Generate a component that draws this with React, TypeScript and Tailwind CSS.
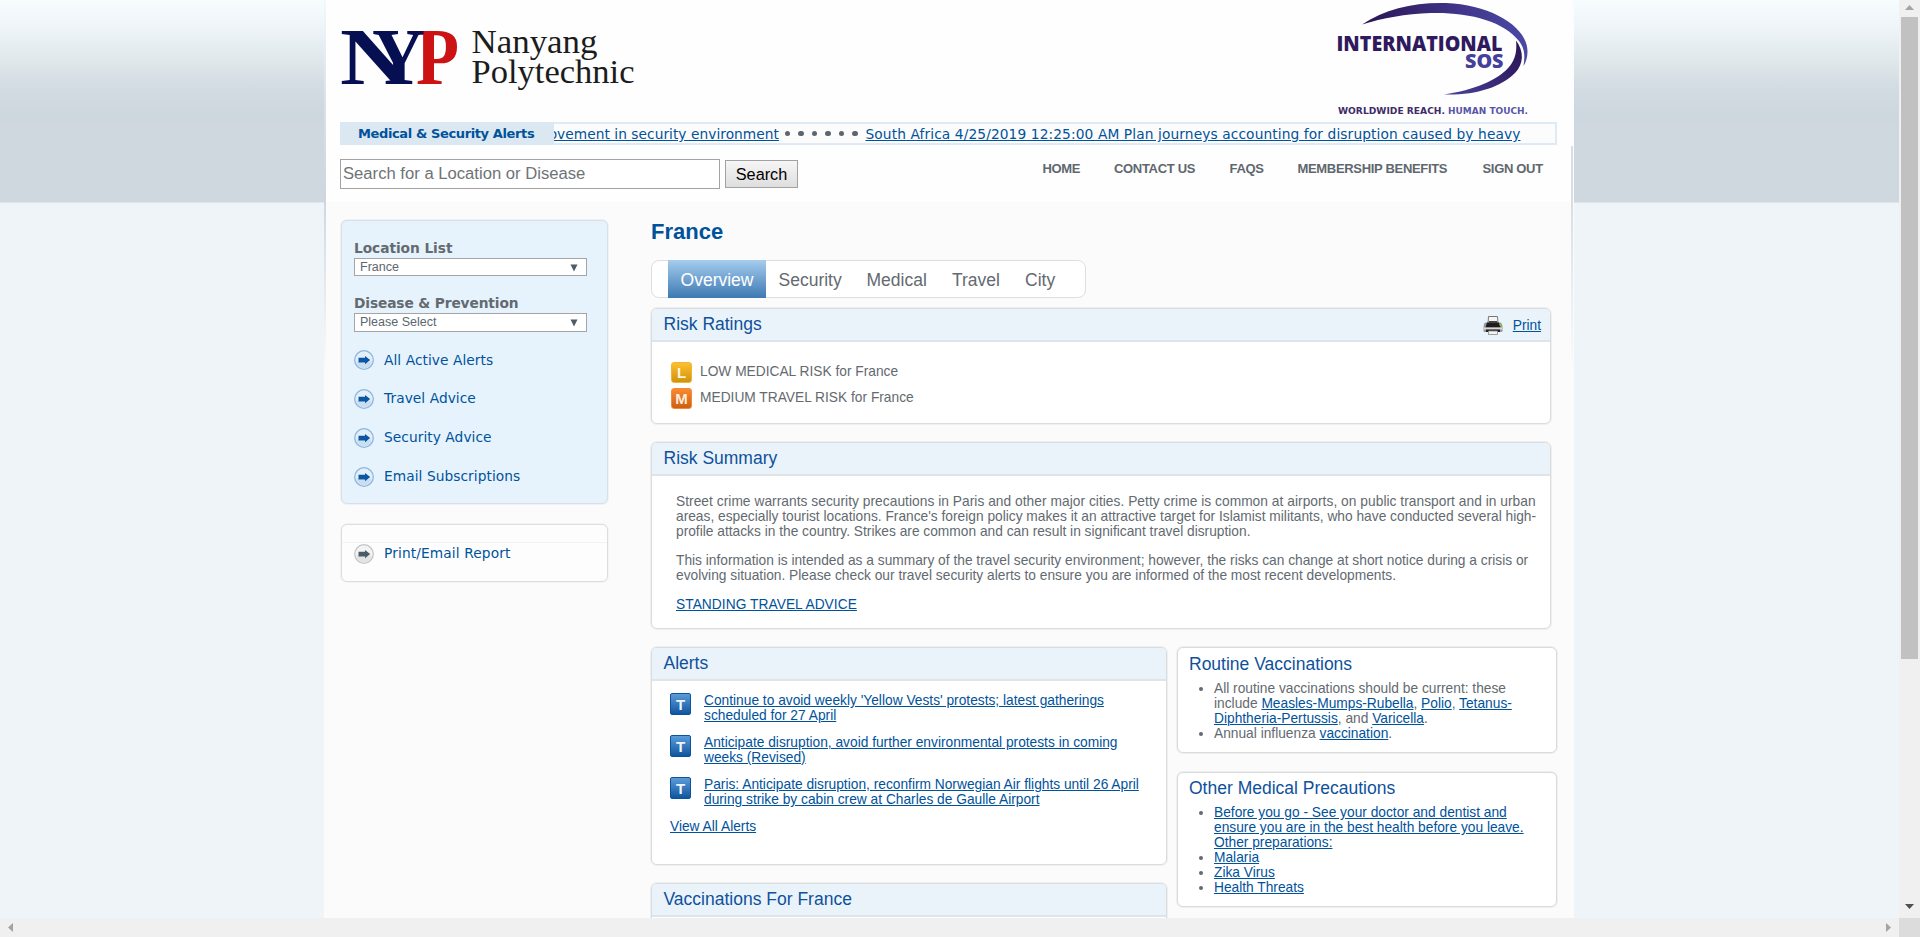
import type { ReactNode } from 'react';

const LINK = 'text-[#00529b] underline underline-offset-1';

function NypLogo() {
  return (
    <svg width="310" height="122" viewBox="340 0 310 122" aria-label="Nanyang Polytechnic">
      <defs>
        <clipPath id="nClip">
          <path d="M338 20H366L407 82V92H338z" />
        </clipPath>
      </defs>
      <g fontFamily="Liberation Serif, serif" fontWeight="700" fontSize="80">
        <text x="340" y="84" fill="#060f52" textLength="68" lengthAdjust="spacingAndGlyphs" clipPath="url(#nClip)">N</text>
        <text x="416" y="84" fill="#cc1212" textLength="43" lengthAdjust="spacingAndGlyphs">P</text>
        <text x="372" y="84" fill="#060f52" textLength="53" lengthAdjust="spacingAndGlyphs">Y</text>
      </g>
      <g fontFamily="Liberation Serif, serif" fontSize="33" fill="#1c1c1c">
        <text x="471.500" y="52.500" textLength="126" lengthAdjust="spacingAndGlyphs">Nanyang</text>
        <text x="471.500" y="82.500" textLength="163" lengthAdjust="spacingAndGlyphs">Polytechnic</text>
      </g>
    </svg>
  );
}

function SosLogo() {
  return (
    <svg width="200" height="122" viewBox="1332 0 200 122" aria-label="International SOS">
      <defs>
        <linearGradient id="swooshTop" x1="0" x2="1">
          <stop offset="0" stopColor="#2a1552" />
          <stop offset="0.6" stopColor="#41368c" />
          <stop offset="1" stopColor="#4a49a3" />
        </linearGradient>
        <linearGradient id="swooshBottom" x1="0" x2="1" y1="1" y2="0">
          <stop offset="0" stopColor="#4a449c" />
          <stop offset="0.6" stopColor="#33206a" />
          <stop offset="1" stopColor="#2a1552" />
        </linearGradient>
      </defs>
      <path d="M1362 24.500C1385 9 1415 2 1446 3C1492 5 1528 27 1527.500 52C1527.300 58 1526 62 1523.500 66C1525 56 1525 49 1519 41C1504 21 1468 12 1431 13C1405 14 1383 18 1362 24.500Z" fill="url(#swooshTop)" />
      <path d="M1516 40.500C1524 51 1524 64 1515 73C1500 88 1474 95.500 1444 94.500C1474 90 1498 80 1509 67C1516 59 1517 50 1516 40.500Z" fill="url(#swooshBottom)" />
      <g fontFamily="Open Sans, sans-serif" fontWeight="800">
        <text x="1336.500" y="51" fontSize="21" fill="#2f1a5e" textLength="166" lengthAdjust="spacingAndGlyphs">INTERNATIONAL</text>
        <text x="1465" y="68" fontSize="19.500" fill="#45409a" textLength="38.500" lengthAdjust="spacingAndGlyphs">SOS</text>
      </g>
      <g fontFamily="DejaVu Sans, sans-serif" fontWeight="700" fontSize="9.500">
        <text x="1338" y="114" fill="#3f2c68" textLength="107" lengthAdjust="spacingAndGlyphs">WORLDWIDE REACH.</text>
        <text x="1448" y="114" fill="#5a55a8" textLength="80" lengthAdjust="spacingAndGlyphs">HUMAN TOUCH.</text>
      </g>
    </svg>
  );
}

function ArrowIcon({ gray = false }: { gray?: boolean }) {
  const ring = gray ? '#c3c6c9' : '#8fb6dc';
  const arrow = gray ? '#4c5b66' : '#0b57a3';
  return (
    <svg width="20" height="20" viewBox="0 0 20 20" className="shrink-0">
      <circle cx="10" cy="10" r="9.300" fill={gray ? '#f3f3f3' : '#e3eff9'} stroke={ring} strokeWidth="1.300" />
      <path d="M2.500 11a7.500 7.500 0 0 0 15 0c-4 2-11 2-15 0z" fill={gray ? '#e2e3e4' : '#c9dff1'} />
      <path d="M4.500 7.800h6.500V6l5.200 4.100-5.200 4.100v-1.800H4.500z" fill={arrow} />
    </svg>
  );
}

function PrinterIcon() {
  return (
    <svg width="20" height="19" viewBox="0 0 20 19" className="shrink-0">
      <path d="M1 8Q1 7 2.500 6.500h15Q19 7 19.500 10v5q0 1-1 1h-17q-1 0-1-1v-4z" fill="#9a9a9a" />
      <path d="M5.500 0.500h9L15 8H5z" fill="#f4f4f4" stroke="#777" />
      <path d="M4 6.500h12l1.500 5h-15z" fill="#1d1d1d" />
      <path d="M6 5h8v2H6z" fill="#444" />
      <path d="M1 11.500h18v2H1z" fill="#d8d8d8" />
      <path d="M3 13.500h14v2.500H3z" fill="#222" />
      <path d="M5.500 15h9v3.500h-9z" fill="#f2f2f2" stroke="#888" strokeWidth=".8" />
      <circle cx="17.500" cy="8.500" r="1.200" fill="#7cc82e" />
    </svg>
  );
}

function Panel({ title, className, action, children }: { title: string; className: string; action?: ReactNode; children?: ReactNode }) {
  return (
    <section className={`flex flex-col overflow-hidden rounded-[6px] border border-[#d9dde0] bg-white shadow-[0_0_0_1px_#eeefef] ${className}`}>
      <header className="flex h-[33px] shrink-0 items-start justify-between border-b-2 border-[#dfe4e8] bg-[#ebf3fa] pt-[5px] pr-[9px] pl-[11.5px]">
        <h2 className="text-[17.5px] leading-5 text-[#0e519c]">{title}</h2>
        {action}
      </header>
      {children}
    </section>
  );
}

function SideBox({ title, className, children }: { title: string; className: string; children: ReactNode }) {
  return (
    <section className={`rounded-[6px] border border-[#d9dbdd] bg-white pl-[11px] shadow-[0_0_0_1px_#eeefef] ${className}`}>
      <h2 className="text-[17.5px] leading-5 text-[#0e519c]">{title}</h2>
      <ul className="mt-[7px] list-disc pl-[25px] text-[13.75px] leading-[15px] whitespace-nowrap">{children}</ul>
    </section>
  );
}

function SelectBox({ value, className }: { value: string; className: string }) {
  return (
    <div className={`flex w-[233px] justify-between border border-[#a5a5a5] bg-white pl-[5px] pr-2 text-[12.5px] leading-[17px] text-[#5d666e] ${className}`}>
      <span>{value}</span>
      <svg width="8" height="8" viewBox="0 0 8 8" className="mt-[5px]"><path d="M.5.500h7L4 7.500z" fill="#4f5c66" /></svg>
    </div>
  );
}

function AlertItem({ lines }: { lines: string[] }) {
  return (
    <li className="flex h-[42px] items-start gap-[13px]">
      <span className="flex h-[22px] w-[21px] items-center justify-center rounded-[2px] border border-[#0a549b] bg-linear-to-b from-[#5b9bd8] to-[#0c569f] text-[15px] font-bold text-[#eef5fc]">T</span>
      <a className={`${LINK} whitespace-nowrap`}>{lines[0]}<br />{lines[1]}</a>
    </li>
  );
}

const NAV = [
  ['HOME', 'w-[71.5px]'],
  ['CONTACT US', 'w-[115.5px]'],
  ['FAQS', 'w-[68px]'],
  ['MEMBERSHIP BENEFITS', 'w-[185px]'],
  ['SIGN OUT', 'w-[60px]'],
];

export default function App() {
  return (
    <div className="flex h-[937px] w-[1920px] flex-col overflow-hidden font-['Liberation_Sans',Arial,sans-serif] text-[#636a70]">
      <div className="flex h-[918px]">
        <div className="flex h-full w-[1899px] overflow-hidden bg-[#eff4f8] bg-[linear-gradient(to_bottom,#f7fcff_0px,#eef4f8_28px,#dfe7ea_62px,#d3dbe3_88px,#cdd7de_115px,#cfd7df_125px,#cfd7df_202px,#eff4f8_203px)] pl-[324px]">
          <div className="flex h-full w-[1250px] flex-col bg-[#fbfbfb]">
            <div className="flex h-[202px] shrink-0">
              <div className="w-[2px] bg-linear-to-b from-[#f3f8fb] via-[#dbe2e7] to-[#cdd6dd]" />
              <div className="flex w-[1245px] flex-col bg-[#fefefe] pl-[14px]">
                <div className="flex h-[122px] justify-between pr-[39px]">
                  <NypLogo />
                  <SosLogo />
                </div>
                <div className="flex h-[23px] w-[1217px] shrink-0 border-y-2 border-r-2 border-[#dfeaf4] bg-[#fcfcfc] font-['DejaVu_Sans',Verdana,sans-serif] leading-[19px]">
                  <div className="-my-[2px] h-[23px] w-[214px] shrink-0 bg-[#dbe8f1] pt-[2px] pl-[18px] text-[13px] font-bold tracking-[-0.38px] whitespace-nowrap text-[#00529b]">
                    Medical &amp; Security Alerts
                  </div>
                  <div className="flex w-[1001px] justify-end overflow-hidden pr-[34.5px] text-[13.75px] leading-[21px] tracking-[0.11px] whitespace-pre">
                    <a className={`${LINK} tracking-[0.04px]`}>rovement in security environment</a>
                    <span className="flex h-[19px] w-[86.5px] shrink-0 items-center gap-2 pl-[6px]">
                      {[0, 1, 2, 3, 4, 5].map((i) => (
                        <i key={i} className="size-[5.5px] rounded-full bg-[#5d666e]" />
                      ))}
                    </span>
                    <a className={LINK}>South Africa 4/25/2019 12:25:00 AM Plan journeys accounting for disruption caused by heavy</a>
                  </div>
                </div>
                <div className="flex pt-[14px]">
                  <div className="h-[30px] w-[380px] border border-[#a3a3a3] bg-white pl-[2px] text-[16.65px] leading-[27px] text-[#6f7377]">Search for a Location or Disease</div>
                  <button className="mt-px ml-[5px] h-[28px] w-[73px] border border-[#a2a2a2] bg-linear-to-b from-[#f6f6f6] to-[#dedede] text-[16.25px] leading-[24px] text-black">Search</button>
                  <nav className="ml-[244.5px] flex pt-[2px] text-[13px] leading-[15px] font-bold tracking-[-0.32px] whitespace-nowrap text-[#5f676e]">
                    {NAV.map(([label, width]) => (
                      <a key={label} className={width}>{label}</a>
                    ))}
                  </nav>
                </div>
              </div>
              <div className="flex w-[3px] flex-col justify-end bg-[#fbfdfe]">
                <div className="h-[56px] w-[2px] bg-[#d5dfe3]" />
              </div>
            </div>

            <div className="flex h-[716px]">
              <div className="w-[2px]">
                <div className="h-[170px] bg-linear-to-b from-[#cfd8df] to-[#fbfbfb]" />
              </div>
              <aside className="w-[325px] shrink-0 pt-[18px] pl-[15px] font-['DejaVu_Sans',Verdana,sans-serif]">
                <div className="h-[284px] w-[267px] rounded-[6px] border border-[#d9dfe4] bg-[#e6f3fd] pl-3 shadow-[0_0_0_1px_#f0f1f2]">
                  <h3 className="pt-[18px] text-[13.75px] leading-[18px] font-bold tracking-[-0.06px]">Location List</h3>
                  <div className="pt-px font-['Liberation_Sans',Arial,sans-serif]">
                    <SelectBox value="France" className="h-[18px]" />
                  </div>
                  <h3 className="pt-[18px] text-[13.75px] leading-[18px] font-bold tracking-[-0.12px]">Disease &amp; Prevention</h3>
                  <div className="pt-px font-['Liberation_Sans',Arial,sans-serif]">
                    <SelectBox value="Please Select" className="h-[19px]" />
                  </div>
                  <ul className="mt-[18px] text-[13.75px] tracking-[0.06px] text-[#00529b]">
                    {['All Active Alerts', 'Travel Advice', 'Security Advice', 'Email Subscriptions'].map((t) => (
                      <li key={t} className="flex h-[39px] gap-[10px] leading-[19px] first:leading-[20px]">
                        <ArrowIcon />
                        {t}
                      </li>
                    ))}
                  </ul>
                </div>
                <div className="mt-5 h-[58px] w-[267px] rounded-[6px] border border-[#dcdddf] bg-[#fdfdfd] shadow-[0_0_0_1px_#f4f4f4]">
                  <div className="h-[18px] border-b border-[#f3f3f3]" />
                  <div className="flex gap-[10px] pt-px pl-3 text-[13.75px] leading-[19px] tracking-[0.12px] text-[#00529b]">
                    <ArrowIcon gray />
                    Print/Email Report
                  </div>
                </div>
              </aside>

              <main className="w-[920px] shrink-0 pt-[18px] text-[13.75px] leading-[15px]">
                <h1 className="text-[22px] leading-6 font-bold text-[#00529b]">France</h1>
                <div className="mt-4 flex h-[38px] w-[435px] rounded-[8px] border border-[#d9e0e5] bg-white pl-4 text-[17.5px] leading-[38px]">
                  <span className="-my-px w-[98px] bg-linear-to-b from-[#a5cdee] to-[#3d79b2] pt-px text-center text-white">Overview</span>
                  <span className="w-[88px] pl-[12.5px]">Security</span>
                  <span className="w-[85px] pl-[12.5px]">Medical</span>
                  <span className="w-[73px] pl-[13px]">Travel</span>
                  <span className="pl-[13px]">City</span>
                </div>

                <Panel
                  title="Risk Ratings"
                  className="mt-[10px] h-[116px] w-[900px]"
                  action={
                    <span className="flex gap-[10px] pt-[2px]">
                      <PrinterIcon />
                      <a className={`${LINK} pt-[2px]`}>Print</a>
                    </span>
                  }
                >
                  <ul className="flex flex-col gap-[5px] pt-[20px] pl-[19px]">
                    <li className="flex items-start gap-2">
                      <span className="flex size-[21px] items-center justify-center rounded-[3px] border border-[#f3b33a] bg-linear-to-b from-[#fdc02c] to-[#d0930c] text-[15px] font-bold text-[#fdf3da]">L</span>
                      <span className="pt-[2px]">LOW MEDICAL RISK for France</span>
                    </li>
                    <li className="flex items-start gap-2">
                      <span className="flex size-[21px] items-center justify-center rounded-[3px] border border-[#f08a3c] bg-linear-to-b from-[#fb8a2e] to-[#cd5f10] text-[15px] font-bold text-[#fdeadb]">M</span>
                      <span className="pt-[2px]">MEDIUM TRAVEL RISK for France</span>
                    </li>
                  </ul>
                </Panel>

                <Panel title="Risk Summary" className="mt-[18px] h-[187px] w-[900px]">
                  <div className="flex flex-col gap-[14px] pt-[18px] pl-6 whitespace-nowrap">
                    <p>
                      <span className="tracking-[0.037px]">Street crime warrants security precautions in Paris and other major cities. Petty crime is common at airports, on public transport and in urban</span><br />
                      areas, especially tourist locations. France's foreign policy makes it an attractive target for Islamist militants, who have conducted several high-<br />
                      profile attacks in the country. Strikes are common and can result in significant travel disruption.
                    </p>
                    <p>
                      This information is intended as a summary of the travel security environment; however, the risks can change at short notice during a crisis or<br />
                      evolving situation. Please check our travel security alerts to ensure you are informed of the most recent developments.
                    </p>
                    <p><a className={`${LINK} tracking-[0.05px]`}>STANDING TRAVEL ADVICE</a></p>
                  </div>
                </Panel>

                <div className="mt-[18px] flex gap-[10px]">
                  <div className="w-[516px]">
                    <Panel title="Alerts" className="h-[218px]">
                      <div className="pt-[12px] pl-[18px]">
                        <ul>
                          <AlertItem lines={["Continue to avoid weekly 'Yellow Vests' protests; latest gatherings", 'scheduled for 27 April']} />
                          <AlertItem lines={['Anticipate disruption, avoid further environmental protests in coming', 'weeks (Revised)']} />
                          <AlertItem lines={['Paris: Anticipate disruption, reconfirm Norwegian Air flights until 26 April', 'during strike by cabin crew at Charles de Gaulle Airport']} />
                        </ul>
                        <a className={LINK}>View All Alerts</a>
                      </div>
                    </Panel>
                    <Panel title="Vaccinations For France" className="mt-[18px] h-[218px]" />
                  </div>
                  <div className="w-[380px]">
                    <SideBox title="Routine Vaccinations" className="h-[106px] pt-[6px]">
                      <li>
                        All routine vaccinations should be current: these<br />
                        include <a className={LINK}>Measles-Mumps-Rubella</a>, <a className={LINK}>Polio</a>, <a className={LINK}>Tetanus-<br />Diphtheria-Pertussis</a>, and <a className={LINK}>Varicella</a>.
                      </li>
                      <li>Annual influenza <a className={LINK}>vaccination</a>.</li>
                    </SideBox>
                    <SideBox title="Other Medical Precautions" className="mt-[19px] h-[135px] pt-[5px]">
                      <li>
                        <a className={LINK}>Before you go - See your doctor and dentist and<br />ensure you are in the best health before you leave.<br />Other preparations:</a>
                      </li>
                      <li><a className={LINK}>Malaria</a></li>
                      <li><a className={LINK}>Zika Virus</a></li>
                      <li><a className={LINK}>Health Threats</a></li>
                    </SideBox>
                  </div>
                </div>
              </main>
              <div className="w-[2px] shrink-0">
                <div className="h-[170px] bg-linear-to-b from-[#d5dfe3] to-[#fbfbfb]" />
              </div>
            </div>
          </div>
        </div>

        <div className="flex w-[21px] flex-col items-center bg-[#f0f0f0]">
          <svg width="9" height="5" viewBox="0 0 9 5" className="mt-[5px]"><path d="M4.500 0L9 5H0z" fill="#a3a3a3" /></svg>
          <div className="mt-[7px] h-[642px] w-[17px] bg-[#c1c1c1]" />
          <svg width="9" height="5" viewBox="0 0 9 5" className="mt-[245px]"><path d="M0 0h9L4.500 5z" fill="#505050" /></svg>
        </div>
      </div>

      <div className="flex h-[19px] items-center bg-[#f0f0f0] pl-[8px]">
        <svg width="5" height="9" viewBox="0 0 5 9"><path d="M5 0v9L0 4.500z" fill="#a3a3a3" /></svg>
        <svg width="5" height="9" viewBox="0 0 5 9" className="ml-auto"><path d="M0 0v9l5-4.500z" fill="#a3a3a3" /></svg>
        <div className="ml-[8px] h-full w-[21px] bg-[#dcdcdc]" />
      </div>
    </div>
  );
}
